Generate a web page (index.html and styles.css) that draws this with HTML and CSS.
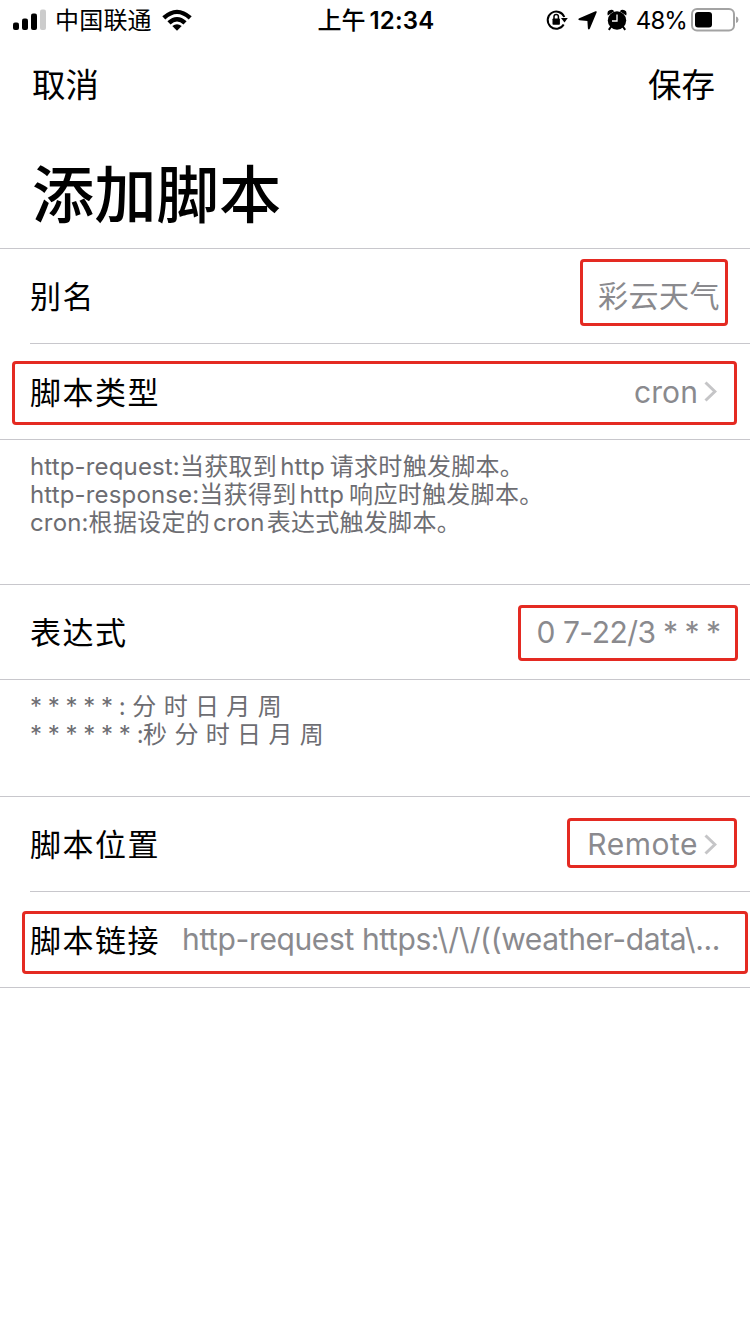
FILE: index.html
```html
<!DOCTYPE html>
<html lang="zh-CN">
<head>
<meta charset="utf-8">
<title>添加脚本</title>
<link rel="stylesheet" href="styles.css">
</head>
<body>
<div class="screen">
  <header class="status">
    <div class="status-left">
      <svg class="signal" width="33" height="22" viewBox="0 0 33 22">
        <rect x="0" y="13.500" width="6" height="7.500" rx="2"/>
        <rect x="9" y="9.500" width="6" height="11.500" rx="2"/>
        <rect x="18" y="4.500" width="6" height="16.500" rx="2"/>
        <rect x="27" y="0.500" width="6" height="20.500" rx="2" fill="#ccc"/>
      </svg>
      <span class="carrier">中国联通</span>
      <svg class="wifi" width="30" height="22" viewBox="0 0 30 22">
        <path d="M0.300 7.300Q15-6 29.700 7.300L26.700 10.500Q15 -0.500 3.300 10.500Z"/>
        <path d="M5.400 12.300Q15 3.500 24.600 12.300L21.500 15.400Q15 9.500 8.500 15.400Z"/>
        <path d="M10.300 17.100Q15 13.500 19.700 17.100L15 21.800Z"/>
      </svg>
    </div>
    <div class="clock"><span class="ampm">上午</span><span class="time">12:34</span></div>
    <div class="status-right">
      <svg class="lock" width="22" height="22" viewBox="0 0 22 22">
        <path d="M17.700 15.500A8.600 8.600 0 1 1 18.300 8" fill="none" stroke="#000" stroke-width="2"/>
        <path d="M15 9H21.800L18.500 13.500Z"/>
        <rect x="6.500" y="9.400" width="7.400" height="6.400" rx="0.800"/>
        <path d="M8 10V7.600a2.200 2.200 0 0 1 4.400 0V10" fill="none" stroke="#000" stroke-width="1.500"/>
      </svg>
      <svg class="arrow" width="19" height="19" viewBox="0 0 19 19"><path d="M17.500 0.300Q19.200-0.200 18.600 1.500L11.900 17.600Q10.700 19.400 9.900 17.400L9.400 9.900L1.500 9.300Q-0.800 8.200 1.300 7.200Z"/></svg>
      <svg class="alarm" width="20" height="22" viewBox="0 0 20 22">
        <circle cx="10" cy="11.500" r="9.200"/>
        <path d="M0.800 6.500Q-0.400 2.200 2.500 1.200Q5.200 0 7.200 2.200ZM19.200 6.500Q20.400 2.200 17.500 1.200Q14.800 0 12.800 2.200Z"/>
        <path d="M4.500 17L1.800 20.800M15.500 17L18.200 20.800" stroke="#000" stroke-width="2"/>
        <path d="M10 5.500V12H5" fill="none" stroke="#fff" stroke-width="1.300"/>
      </svg>
      <span class="percent">48%</span>
      <svg class="battery" width="48" height="24" viewBox="0 0 48 24">
        <rect x="1" y="1" width="42" height="21.500" rx="5" fill="none" stroke="#a3a3a3" stroke-width="2"/>
        <rect x="4" y="4" width="17" height="15.500" rx="3"/>
        <path d="M45 8.500Q47.500 9 47.500 11.700T45 15Z" fill="#a3a3a3"/>
      </svg>
    </div>
  </header>

  <nav class="nav"><span>取消</span><span>保存</span></nav>
  <h1 class="title">添加脚本</h1>

  <section class="group">
    <div class="row">
      <span class="label">别名</span><span class="value value-cjk">彩云天气</span>
      <i class="mark mark-alias"></i>
    </div>
    <div class="row row-next">
      <span class="label">脚本类型</span><span class="value value-cron">cron</span>
      <svg class="chevron" width="13" height="21" viewBox="0 0 13 21"><path d="M1.500 1.500L10.900 10.500L1.500 19.500"/></svg>
      <i class="mark mark-type"></i>
    </div>
  </section>
  <div class="help help-type">
    <p><span class="lat">http-request:</span>当获取到<span class="lat http">http</span>请求时触发脚本。</p>
    <p><span class="lat">http-response:</span>当获得到<span class="lat http">http</span>响应时触发脚本。</p>
    <p><span class="lat">cron:</span>根据设定的<span class="lat cron">cron</span>表达式触发脚本。</p>
  </div>

  <section class="group">
    <div class="row">
      <span class="label">表达式</span><span class="value value-expr">0 7-22/3<span class="wild"> * * *</span></span>
      <i class="mark mark-expr"></i>
    </div>
  </section>
  <div class="help help-expr">
    <p><span class="stars">* * * * * :</span><span class="units units-five">分 时 日 月 周</span></p>
    <p><span class="stars">* * * * * * :</span><span class="units">秒 分 时 日 月 周</span></p>
  </div>

  <section class="group">
    <div class="row">
      <span class="label">脚本位置</span><span class="value value-remote">Remote</span>
      <svg class="chevron" width="13" height="21" viewBox="0 0 13 21"><path d="M1.500 1.500L10.900 10.500L1.500 19.500"/></svg>
      <i class="mark mark-place"></i>
    </div>
    <div class="row row-next">
      <span class="label">脚本链接</span><span class="value value-link">http-request https:\/\/((weather-data\...</span>
      <i class="mark mark-link"></i>
    </div>
  </section>
</div>
</body>
</html>
```
FILE: styles.css
```css
* { box-sizing: border-box; }
body {
  margin: 0;
  background: #fff;
  color: #000;
  font-family: Inter, "Noto Sans CJK SC", sans-serif;
}
.screen { width: 750px; height: 1334px; overflow: hidden; white-space: nowrap; }
svg { display: block; flex: none; }

.status {
  display: grid;
  grid-template-columns: 1fr auto 1fr;
  align-items: center;
  height: 40px;
  padding: 0 11px 0 13px;
}
.status-left, .status-right, .clock { display: flex; align-items: center; }
.status-right { justify-content: flex-end; }
.signal { margin-right: 9px; }
.carrier { padding-top: 2px; font-size: 24px; letter-spacing: 0.200px; line-height: 38px; }
.wifi { margin-left: 10px; }
.clock { font-size: 24px; }
.ampm { margin-right: 4px; padding-bottom: 3px; font-weight: 500; }
.time { font-weight: 600; letter-spacing: 0.200px; }
.arrow { margin-left: 10px; }
.alarm { margin-left: 10px; }
.percent { margin-left: 9px; font-size: 24px; letter-spacing: -0.900px; }
.battery { margin-left: 4px; }

.nav {
  display: flex;
  justify-content: space-between;
  height: 90px;
  padding: 0 35px 0 32px;
  font-size: 33.500px;
  line-height: 90px;
}
.title {
  height: 118px;
  margin: 0;
  padding-left: 32px;
  font-size: 62.300px;
  font-weight: 500;
  line-height: 131px;
}

.group { border-top: 1px solid #c8c7cc; border-bottom: 1px solid #c8c7cc; }
.row {
  position: relative;
  display: flex;
  align-items: center;
  height: 94px;
  padding: 0 30px;
}
.row-next { height: 96px; }
.row-next::before {
  content: "";
  position: absolute;
  top: 0;
  left: 30px;
  right: 0;
  border-top: 1px solid #c8c7cc;
}
.label { padding-bottom: 4px; font-size: 31px; letter-spacing: 1.500px; }
.row-next .label { padding-bottom: 2px; }
.value { margin-left: auto; color: #8a8a8e; font-size: 30px; }
.value-cjk { padding-bottom: 5px; letter-spacing: 0.500px; }
.value-cron { padding-top: 1px; letter-spacing: 0.100px; }
.value-expr { letter-spacing: -0.500px; }
.wild { letter-spacing: -1px; }
.value-remote { letter-spacing: 0.500px; }
.value-link { letter-spacing: -0.380px; }
.chevron { margin: 0 3px 0 6px; fill: none; stroke: #c5c5c7; stroke-width: 3; }

.mark { position: absolute; border: 3px solid #e42a22; border-radius: 4px; }
.mark-alias { left: 580px; top: 10px; width: 148px; height: 67px; }
.mark-type { left: 12px; top: 18px; width: 725px; height: 64px; }
.mark-expr { left: 518px; top: 20px; width: 220px; height: 56px; }
.mark-place { left: 567px; top: 21px; width: 170px; height: 50px; }
.mark-link { left: 22px; top: 20px; width: 726px; height: 63px; }

.help {
  padding: 13px 30px 0;
  color: #6d6d72;
  font-size: 24px;
  line-height: 28px;
  letter-spacing: 0.300px;
}
.help p { height: 28px; margin: 0; }
.help-type { height: 144px; }
.help-expr { height: 116px; }
.lat { letter-spacing: 0.150px; }
.http { margin: 0 5px 0 3px; }
.cron { margin: 0 2px 0 3px; }
.stars { letter-spacing: -0.500px; }
.units { letter-spacing: 0.300px; }
.units-five { margin-left: 7px; }
```
